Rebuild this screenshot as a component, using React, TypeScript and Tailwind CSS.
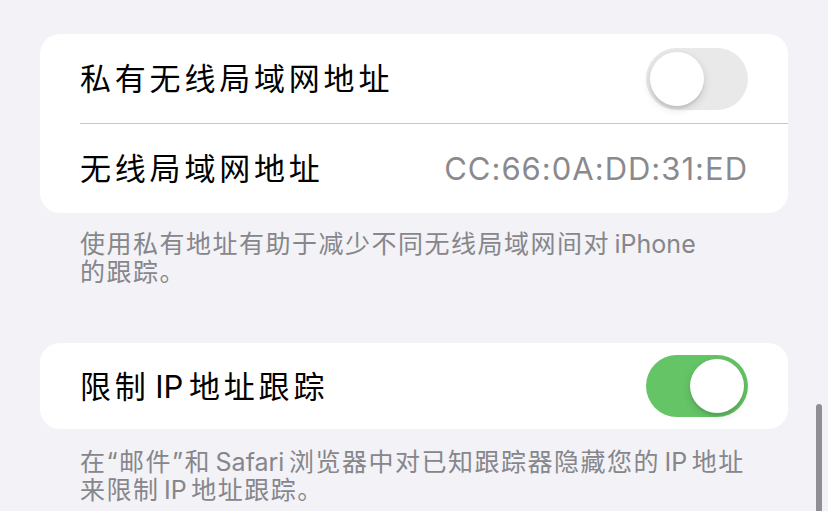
import React from 'react';

const FONT = "font-['Inter','Noto_Sans_CJK_SC',sans-serif]";

const Toggle = ({ on }: { on: boolean }) => (
  <div
    className={`flex h-[62px] w-[102px] shrink-0 items-center rounded-full p-[4px] ${
      on ? 'justify-end bg-[#65c466]' : 'justify-start bg-[#e9e9ea]'
    }`}
  >
    <div className="h-[54px] w-[54px] rounded-full bg-white shadow-[0_3px_8px_rgba(0,0,0,0.15),0_3px_1px_rgba(0,0,0,0.06)]" />
  </div>
);

// latin words inside CJK text keep normal spacing
const Latin = ({ children }: { children: React.ReactNode }) => (
  <span className="tracking-normal">{children}</span>
);

const App = () => {
  return (
    <div className={`relative h-[511px] w-[828px] overflow-hidden bg-[#f2f2f7] px-10 pt-[34px] ${FONT}`}>
      {/* Wi-Fi address card */}
      <div className="overflow-hidden rounded-[20px] bg-white">
        <div className="flex h-[89px] items-center justify-between px-10">
          <span className="text-[31px] leading-none tracking-[3.8px] text-black">私有无线局域网地址</span>
          <Toggle on={false} />
        </div>
        <div className="ml-10 h-px bg-[#c6c6c8]" />
        <div className="flex h-[89px] items-center justify-between px-10">
          <span className="text-[31px] leading-none tracking-[3.8px] text-black">无线局域网地址</span>
          <span className="text-[31px] leading-none tracking-[1px] text-[#8a8a8e]">CC:66:0A:DD:31:ED</span>
        </div>
      </div>
      <p className="mt-[17px] whitespace-nowrap px-10 text-[25px] leading-[28px] tracking-[1.5px] text-[#86868b]">
        使用私有地址有助于减少不同无线局域网间对<Latin>{'\u2009'}iPhone</Latin>
        <br />
        的跟踪。
      </p>

      {/* IP tracking card */}
      <div className="mt-[57px] flex h-[86px] items-center justify-between rounded-[20px] bg-white px-10">
        <span className="text-[31px] leading-none tracking-[3.8px] text-black">
          限制<Latin>{'\u2009'}IP{'\u2009'}</Latin>地址跟踪
        </span>
        <Toggle on />
      </div>
      <p className="mt-[19px] whitespace-nowrap px-10 text-[25px] leading-[28px] tracking-[1.5px] text-[#86868b]">
        在“邮件”和<Latin>{'\u2009'}Safari{'\u2009'}</Latin>浏览器中对已知跟踪器隐藏您的<Latin>{'\u2009'}IP{'\u2009'}</Latin>地址
        <br />
        来限制<Latin>{'\u2009'}IP{'\u2009'}</Latin>地址跟踪。
      </p>

      {/* scroll indicator */}
      <div className="absolute left-[816px] top-[404px] h-[120px] w-[6px] rounded-full bg-[#8e8e93]" />
    </div>
  );
};

export default App;
